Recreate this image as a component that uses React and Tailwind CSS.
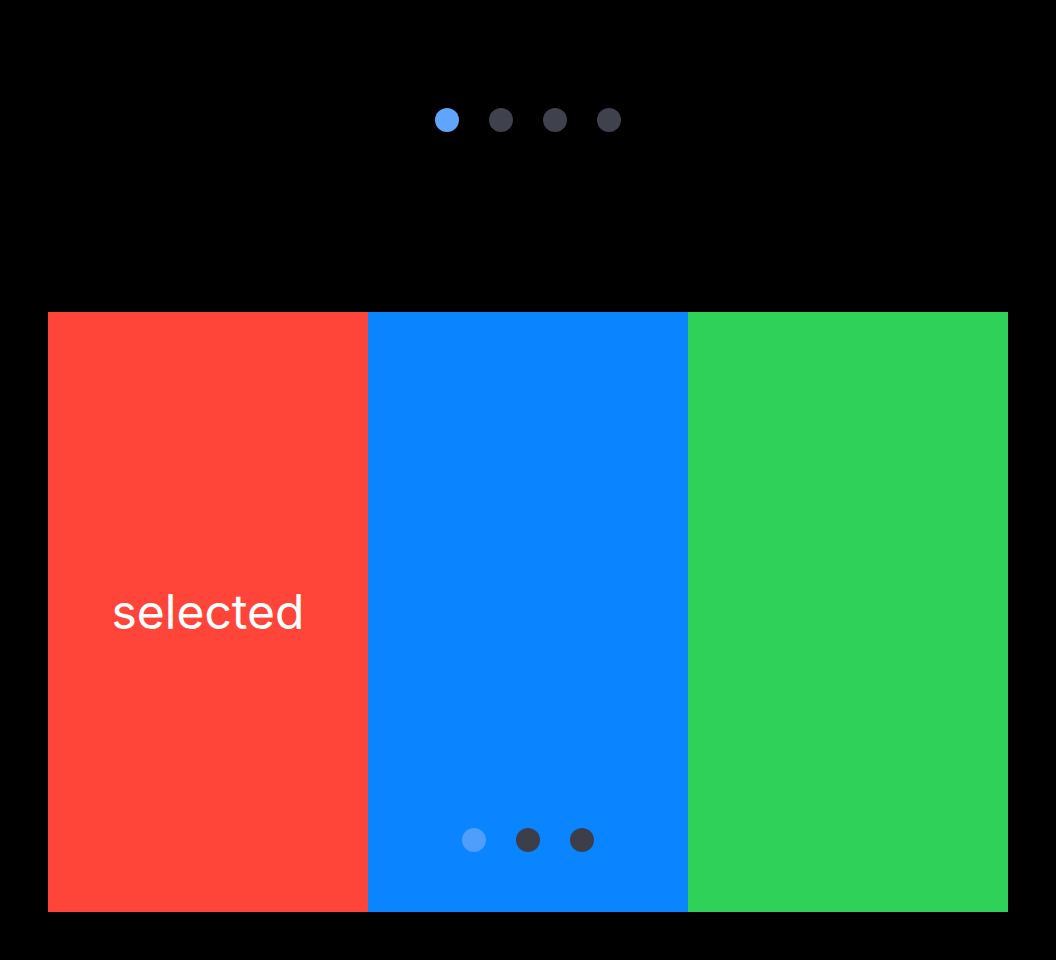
const panels = [
  { color: 'bg-[#ff453a]', label: 'selected' },
  { color: 'bg-[#0a84ff]', label: '' },
  { color: 'bg-[#30d158]', label: '' },
];

export default function App() {
  return (
    <div className="w-[1056px] h-[960px] bg-black flex flex-col items-center pt-[108px]" style={{ fontFamily: 'Inter, "Noto Sans", sans-serif' }}>
      {/* page indicator */}
      <div className="flex gap-[30px]">
        <span className="w-6 h-6 rounded-full bg-[#60a5fa]" />
        <span className="w-6 h-6 rounded-full bg-[#3f424d]" />
        <span className="w-6 h-6 rounded-full bg-[#3f424d]" />
        <span className="w-6 h-6 rounded-full bg-[#3f424d]" />
      </div>

      <div className="relative mt-[180px] flex w-[960px] h-[600px]">
        {panels.map((p, i) => (
          <div key={i} className={`${p.color} flex-1 flex items-center justify-center`}>
            {p.label && <span className="text-white text-[48px] leading-none">{p.label}</span>}
          </div>
        ))}
        <div className="absolute bottom-[60px] left-0 right-0 flex justify-center gap-[30px]">
          <span className="w-6 h-6 rounded-full bg-[#60a5fa]/80" />
          <span className="w-6 h-6 rounded-full bg-[#3c3f4a]" />
          <span className="w-6 h-6 rounded-full bg-[#3c3f4a]" />
        </div>
      </div>
    </div>
  );
}
